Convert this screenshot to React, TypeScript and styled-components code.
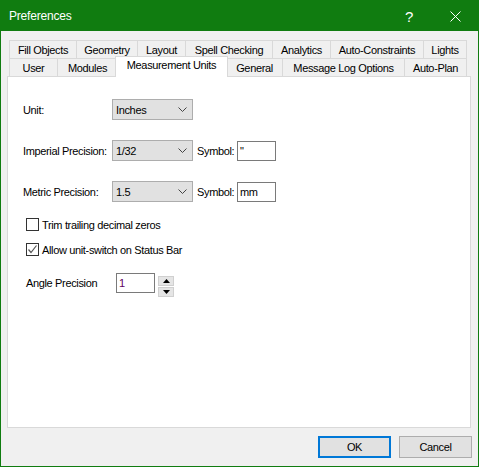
import React from 'react';
import styled, { createGlobalStyle } from 'styled-components';

const Global = createGlobalStyle`
  html, body { margin: 0; padding: 0; background: #f0f0f0; }
  body { font-family: "Liberation Sans", Arial, sans-serif; }
`;

const Window = styled.div`
  box-sizing: border-box;
  width: 479px;
  height: 467px;
  border: 1px solid #107c10;
  background: #f0f0f0;
  display: flex;
  flex-direction: column;
  font-family: "Liberation Sans", Arial, sans-serif;
  font-size: 11px;
  letter-spacing: -0.35px;
  color: #000;
`;

const TitleBar = styled.div`
  height: 30px;
  flex: none;
  background: #107c10;
  color: #fff;
  display: flex;
  align-items: center;
  padding-left: 8px;
  font-size: 12px;
  letter-spacing: -0.2px;
`;

const Title = styled.div`
  flex: 1;
  padding-bottom: 1px;
`;

const CaptionButton = styled.div`
  width: 46px;
  height: 30px;
  display: flex;
  align-items: center;
  justify-content: center;
  font-size: 15px;
  color: #fff;
`;

const Body = styled.div`
  flex: 1;
  display: flex;
  flex-direction: column;
  padding: 9px 7px 8px 6px;
`;

const TabStrip = styled.div`
  margin-left: 2px;
  display: flex;
  flex-direction: column;
  flex: none;
`;

const TabRow = styled.div`
  display: flex;
  height: 18px;
  align-items: flex-end;
`;

const Tab = styled.div<{ $w: number; $active?: boolean }>`
  box-sizing: border-box;
  width: ${(p) => p.$w}px;
  height: ${(p) => (p.$active ? 21 : 18)}px;
  flex: none;
  border-top: 1px solid #d9d9d9;
  border-left: 1px solid #d9d9d9;
  background: ${(p) => (p.$active ? '#fff' : '#f0f0f0')};
  display: flex;
  align-items: center;
  justify-content: center;
  white-space: nowrap;
  padding-bottom: ${(p) => (p.$active ? 4 : 0)}px;
  position: relative;
  z-index: ${(p) => (p.$active ? 2 : 0)};
  margin: ${(p) => (p.$active ? '0 -2px -1px -2px' : '0')};
  border-right: ${(p) => (p.$active ? '1px solid #d9d9d9' : 'none')};
  &:last-child {
    border-right: 1px solid #d9d9d9;
  }
`;

const Panel = styled.div`
  flex: 1;
  background: #fff;
  border: 1px solid #d9d9d9;
  padding: 22px 0 0 15px;
  display: flex;
  flex-direction: column;
`;

const FieldRow = styled.div<{ $mt?: number }>`
  display: flex;
  align-items: center;
  height: 21px;
  margin-top: ${(p) => p.$mt ?? 0}px;
`;

const Label = styled.div<{ $w: number }>`
  width: ${(p) => p.$w}px;
  flex: none;
  white-space: nowrap;
`;

const Select = styled.div`
  box-sizing: border-box;
  width: 81px;
  height: 21px;
  border: 1px solid #adadad;
  background: #e1e1e1;
  display: flex;
  align-items: center;
  padding: 0 5px 0 3px;
  justify-content: space-between;
`;

const SymbolLabel = styled.div`
  margin-left: 4px;
  width: 40px;
  white-space: nowrap;
`;

const TextInput = styled.div<{ $w: number; $color?: string }>`
  box-sizing: border-box;
  width: ${(p) => p.$w}px;
  height: 20px;
  border: 1px solid #7a7a7a;
  background: #fff;
  display: flex;
  align-items: center;
  padding-left: 2px;
  color: ${(p) => p.$color ?? '#000'};
`;

const CheckRow = styled.div<{ $mt: number }>`
  display: flex;
  align-items: center;
  gap: 3px;
  margin-top: ${(p) => p.$mt}px;
  margin-left: 3px;
  height: 13px;
`;

const Box = styled.div`
  box-sizing: border-box;
  width: 13px;
  height: 13px;
  border: 1px solid #333;
  background: #fff;
  display: flex;
  align-items: center;
  justify-content: center;
`;

const AngleRow = styled.div`
  display: flex;
  align-items: flex-start;
  margin-top: 17px;
  margin-left: 3px;
`;

const AngleLabel = styled.div`
  width: 90px;
  height: 20px;
  display: flex;
  align-items: center;
`;

const Spin = styled.div`
  margin-left: 3px;
  margin-top: 3px;
  display: flex;
  flex-direction: column;
  gap: 1px;
`;

const SpinButton = styled.div`
  box-sizing: border-box;
  width: 16px;
  height: 10px;
  border: 1px solid #d0d0d0;
  background: #e5e5e5;
  display: flex;
  align-items: center;
  justify-content: center;
`;

const ButtonRow = styled.div`
  display: flex;
  justify-content: flex-end;
  gap: 8px;
  margin-top: 8px;
  margin-right: -1px;
  flex: none;
`;

const Button = styled.div<{ $default?: boolean }>`
  box-sizing: border-box;
  width: 73px;
  height: 22px;
  background: #e1e1e1;
  border: ${(p) => (p.$default ? '2px solid #0078d7' : '1px solid #adadad')};
  display: flex;
  align-items: center;
  justify-content: center;
`;

const Chevron = () => (
  <svg width="9" height="5" viewBox="0 0 9 5">
    <polyline points="0.5,0.5 4.5,4.5 8.5,0.5" fill="none" stroke="#444" strokeWidth="1" />
  </svg>
);

const row1 = [
  ['Fill Objects', 67],
  ['Geometry', 61],
  ['Layout', 48],
  ['Spell Checking', 87],
  ['Analytics', 58],
  ['Auto-Constraints', 93],
  ['Lights', 44],
] as const;

const row2 = [
  ['User', 48],
  ['Modules', 60],
  ['Measurement Units', 113],
  ['General', 56],
  ['Message Log Options', 122],
  ['Auto-Plan', 63],
] as const;

export default function App() {
  return (
    <>
      <Global />
      <Window>
        <TitleBar>
          <Title>Preferences</Title>
          <CaptionButton>?</CaptionButton>
          <CaptionButton>
            <svg width="11" height="11" viewBox="0 0 11 11">
              <path d="M0.5 0.5 L10.5 10.5 M10.5 0.5 L0.5 10.5" stroke="#fff" strokeWidth="1" />
            </svg>
          </CaptionButton>
        </TitleBar>
        <Body>
          <TabStrip>
            <TabRow>
              {row1.map(([t, w]) => (
                <Tab key={t} $w={w}>{t}</Tab>
              ))}
            </TabRow>
            <TabRow>
              {row2.map(([t, w]) => (
                <Tab key={t} $w={w} $active={t === 'Measurement Units'}>{t}</Tab>
              ))}
            </TabRow>
          </TabStrip>
          <Panel>
            <FieldRow>
              <Label $w={89}>Unit:</Label>
              <Select>
                <span>Inches</span>
                <Chevron />
              </Select>
            </FieldRow>
            <FieldRow $mt={20}>
              <Label $w={89}>Imperial Precision:</Label>
              <Select>
                <span>1/32</span>
                <Chevron />
              </Select>
              <SymbolLabel>Symbol:</SymbolLabel>
              <TextInput $w={39}>"</TextInput>
            </FieldRow>
            <FieldRow $mt={20}>
              <Label $w={89}>Metric Precision:</Label>
              <Select>
                <span>1.5</span>
                <Chevron />
              </Select>
              <SymbolLabel>Symbol:</SymbolLabel>
              <TextInput $w={39}>mm</TextInput>
            </FieldRow>
            <CheckRow $mt={16}>
              <Box />
              <span>Trim trailing decimal zeros</span>
            </CheckRow>
            <CheckRow $mt={12}>
              <Box>
                <svg width="11" height="11" viewBox="0 0 11 11">
                  <polyline points="1.5,5.5 4,8.5 9.5,1.5" fill="none" stroke="#555" strokeWidth="1.2" />
                </svg>
              </Box>
              <span>Allow unit-switch on Status Bar</span>
            </CheckRow>
            <AngleRow>
              <AngleLabel>Angle Precision</AngleLabel>
              <TextInput $w={39} $color="#600060">1</TextInput>
              <Spin>
                <SpinButton>
                  <svg width="7" height="4" viewBox="0 0 7 4"><polygon points="3.5,0 7,4 0,4" fill="#000" /></svg>
                </SpinButton>
                <SpinButton>
                  <svg width="7" height="4" viewBox="0 0 7 4"><polygon points="0,0 7,0 3.5,4" fill="#000" /></svg>
                </SpinButton>
              </Spin>
            </AngleRow>
          </Panel>
          <ButtonRow>
            <Button $default>OK</Button>
            <Button>Cancel</Button>
          </ButtonRow>
        </Body>
      </Window>
    </>
  );
}
